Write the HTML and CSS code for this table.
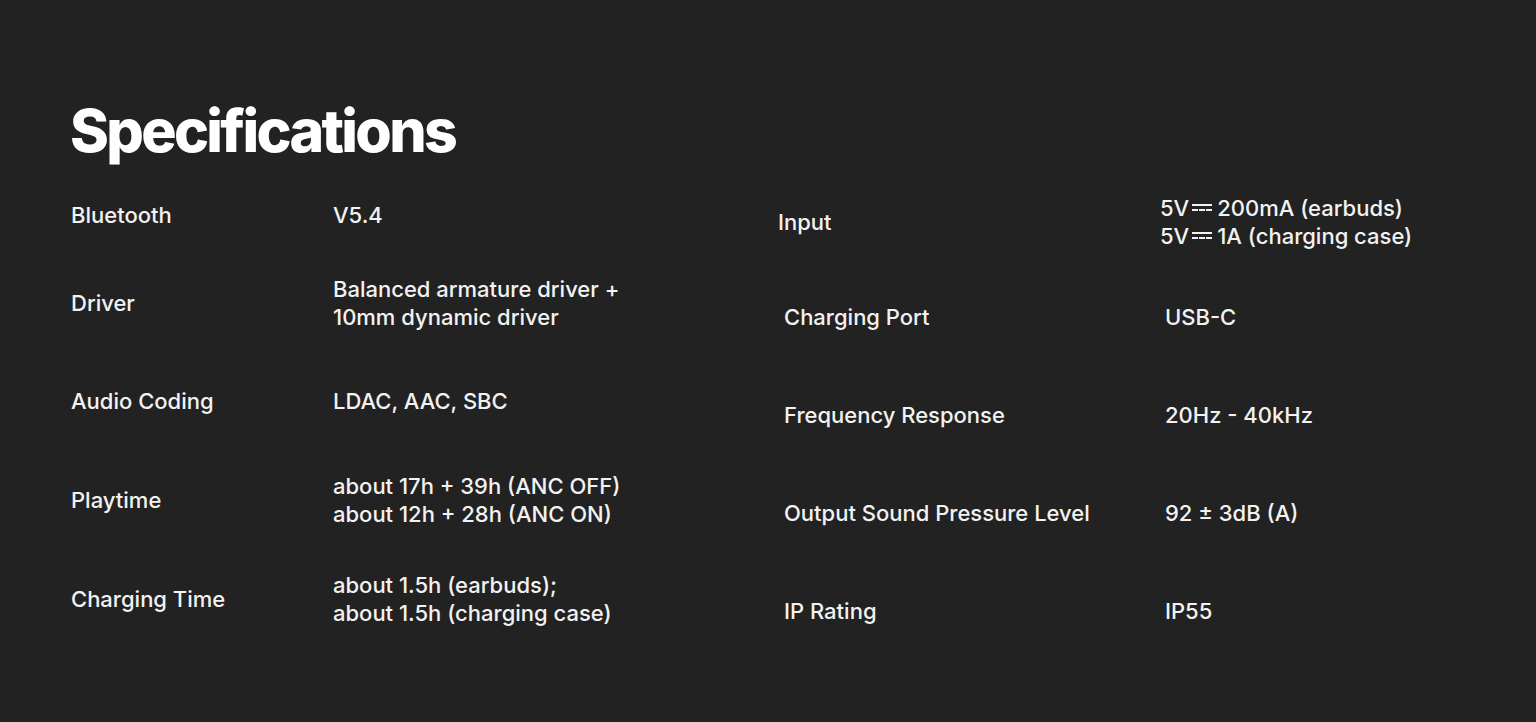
FILE: index.html
```html
<!DOCTYPE html>
<html lang="en">
<head>
<meta charset="utf-8">
<title>Specifications</title>
<link rel="stylesheet" href="styles.css">
</head>
<body>
<section class="specs">
  <h1 class="title">Specifications</h1>
  <div class="columns">
    <div class="col col-left">
      <div class="row row-first-left">
        <div class="label">Bluetooth</div>
        <div class="value">V5.4</div>
      </div>
      <div class="row">
        <div class="label">Driver</div>
        <div class="value">Balanced armature driver +<br>10mm dynamic driver</div>
      </div>
      <div class="row">
        <div class="label">Audio Coding</div>
        <div class="value">LDAC, AAC, SBC</div>
      </div>
      <div class="row row-tall">
        <div class="label">Playtime</div>
        <div class="value">about 17h + 39h (ANC OFF)<br>about 12h + 28h (ANC ON)</div>
      </div>
      <div class="row">
        <div class="label">Charging Time</div>
        <div class="value">about 1.5h (earbuds);<br>about 1.5h (charging case)</div>
      </div>
    </div>
    <div class="col col-right">
      <div class="row row-first-right row-shift">
        <div class="label">Input</div>
        <div class="value"><span class="dc">5V<span class="dc-sym"></span>200mA (earbuds)</span><br><span class="dc">5V<span class="dc-sym"></span>1A (charging case)</span></div>
      </div>
      <div class="row">
        <div class="label">Charging Port</div>
        <div class="value">USB-C</div>
      </div>
      <div class="row">
        <div class="label">Frequency Response</div>
        <div class="value">20Hz - 40kHz</div>
      </div>
      <div class="row">
        <div class="label">Output Sound Pressure Level</div>
        <div class="value">92 ± 3dB (A)</div>
      </div>
      <div class="row">
        <div class="label">IP Rating</div>
        <div class="value">IP55</div>
      </div>
    </div>
  </div>
</section>
</body>
</html>
```

FILE: styles.css
```css
* { box-sizing: border-box; }
html, body {
  margin: 0;
  padding: 0;
  background: #222222;
  height: 100%;
}
body {
  color: #f2f2f2;
  font-family: "Inter", "Noto Sans", sans-serif;
  overflow: hidden;
}
.specs {
  padding: 96px 0 0 70px;
}
.title {
  margin: 0;
  font-size: 59px;
  line-height: 70px;
  font-weight: 800;
  letter-spacing: -2.7px;
  color: #ffffff;
}
.columns {
  display: flex;
  margin-top: 10px;
}
.col {
  display: flex;
  flex-direction: column;
}
.col-left { width: 714px; padding-left: 1px; }
.row {
  display: flex;
  align-items: center;
  height: 98px;
  font-size: 22px;
  line-height: 28px;
  font-weight: 500;
}
.row-first-left { height: 78px; }
.row-tall { height: 100px; }
.row-first-right { height: 92px; }
.col-left .label { width: 262px; }
.col-right .label { width: 381px; }
.row-shift { margin-left: -6px; }
.row-shift .label { width: 382px; }
.dc { white-space: nowrap; }
.dc-sym {
  display: inline-block;
  width: 20px;
  height: 7px;
  margin: 0 5px 0 3px;
  vertical-align: 5px;
  border-top: 2px solid #f2f2f2;
  border-bottom: 2px dashed #f2f2f2;
}
```
